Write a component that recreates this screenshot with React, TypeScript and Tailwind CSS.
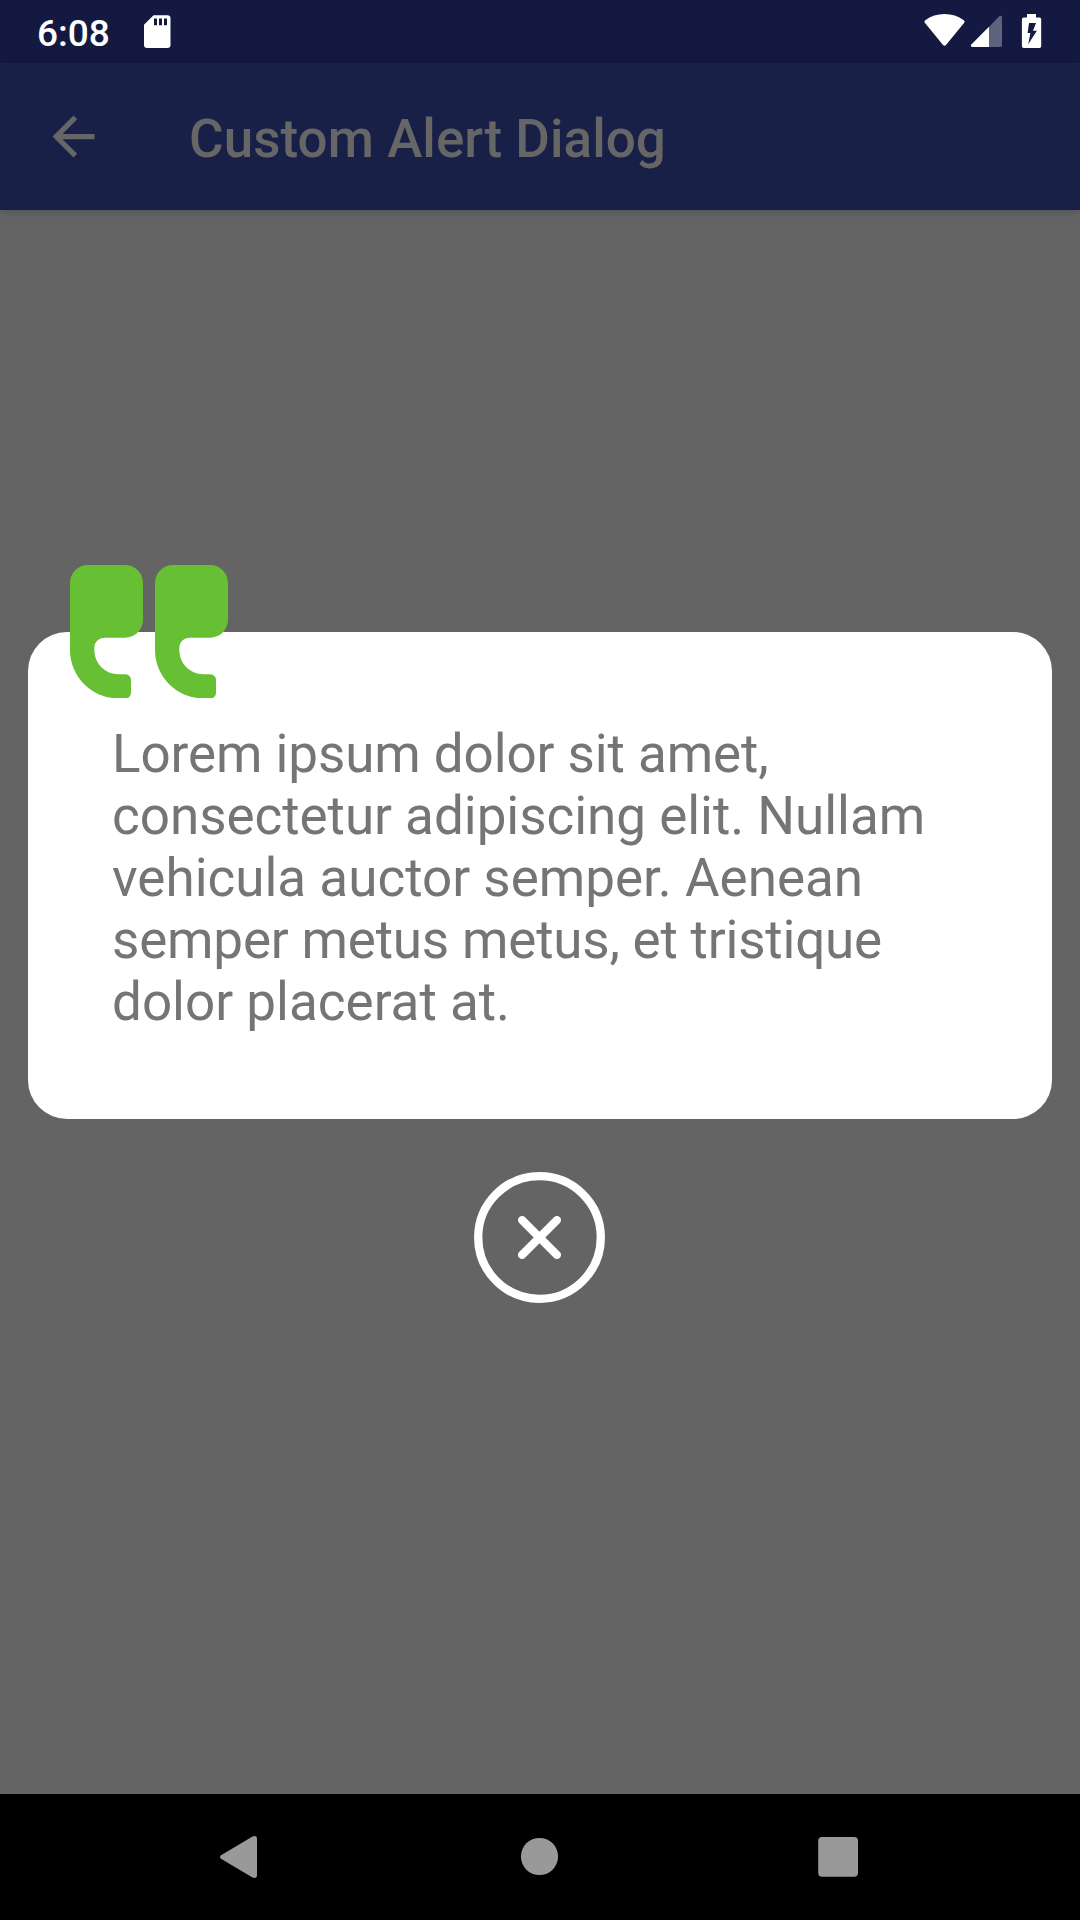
import React from "react";

function StatusBar() {
  return (
    <header className="flex h-[63px] items-center bg-[#131940] pl-[37px] text-white">
      <span className="w-[106px] text-[37px] leading-[43px] font-medium pt-[3px]">6:08</span>
      <svg className="h-[63px] w-[28px]" viewBox="143 0 28 63" fill="currentColor">
        <path
          fillRule="evenodd"
          d="M153.500 15.200H167.500A3 3 0 0 1 170.500 18.200V45A3 3 0 0 1 167.500 48H147A3 3 0 0 1 144 45V24.700ZM154 18.500V25.200H157V18.500ZM159 18.500V25.200H162V18.500ZM164 18.500V25.200H167V18.500Z"
        />
      </svg>
      <div className="ml-auto flex">
        <svg className="h-[63px] w-[44px]" viewBox="922 0 44 63" fill="currentColor">
          <path d="M924.8 22.800Q923.700 21.300 925.200 20.200Q933.500 14.100 944.500 14.100T963.800 20.200Q965.300 21.300 964.200 22.800L946 45Q944.500 46.500 943 45Z" />
        </svg>
        <svg className="h-[63px] w-[44px]" viewBox="966 0 44 63" fill="currentColor">
          <path opacity=".32" d="M988.900 26.900L999 16.600Q1002 14.500 1002 17.500V45Q1002 47 1000 47H988.900Z" />
          <path d="M989 26.800V47H972.500Q970 46.500 971.300 44.500Z" />
        </svg>
        <svg className="h-[63px] w-[70px]" viewBox="1010 0 70 63" fill="currentColor">
          <path
            fillRule="evenodd"
            d="M1027 14H1036V17.600H1039.400Q1041.200 17.600 1041.200 19.400V46.200Q1041.200 48 1039.400 48H1023.700Q1021.900 48 1021.900 46.200V19.400Q1021.900 17.600 1023.700 17.600H1027ZM1029 22.900L1027.600 33.100H1030.400L1028.200 44.200L1036.900 30.700H1033L1036 22.900Z"
          />
        </svg>
      </div>
    </header>
  );
}

function Toolbar() {
  return (
    <div className="relative flex h-[147px] items-center bg-[#192048] pl-[42px] text-[#666666] shadow-[0_2px_7px_rgba(0,0,0,0.16)]">
      <svg className="h-[63px] w-[63px]" viewBox="0 0 24 24" fill="currentColor">
        <path d="M20 11H7.830l5.590-5.590L12 4l-8 8 8 8 1.410-1.410L7.830 13H20v-2z" />
      </svg>
      <h1 className="ml-[84px] pt-[5px] text-[53px] leading-[62px] font-medium tracking-[0.05px] whitespace-nowrap">
        Custom Alert Dialog
      </h1>
    </div>
  );
}

const quoteMark =
  "M54 0H165A54 54 0 0 1 219 54V164A54 54 0 0 1 165 218H103A30 30 0 0 0 73 248V256A72 72 0 0 0 145 328H167A16 16 0 0 1 183 344V384A16 16 0 0 1 167 400H145A145 145 0 0 1 0 255V54A54 54 0 0 1 54 0Z";

function AlertDialog() {
  return (
    <main className="flex flex-1 flex-col items-center pt-[422px]">
      <section className="relative h-[487px] w-[1024px] rounded-[39px] bg-white pt-[91px] pl-[84px]">
        <svg className="absolute -top-[67px] left-[42px] h-[133.333px] w-[158px]" viewBox="0 0 474 400" fill="#67c033">
          <path d={quoteMark} />
          <path d={quoteMark} transform="translate(255 0)" />
        </svg>
        <p className="text-[53px] leading-[62px] whitespace-nowrap text-[#757575]">
          <span className="block tracking-[-0.09px]">Lorem ipsum dolor sit amet,</span>
          <span className="block tracking-[-0.035px]">consectetur adipiscing elit. Nullam</span>
          <span className="block">vehicula auctor semper. Aenean</span>
          <span className="block tracking-[-0.2px]">semper metus metus, et tristique</span>
          <span className="block">dolor placerat at.</span>
        </p>
      </section>
      <button aria-label="Close" className="mt-[53px] mr-px">
        <svg className="block h-[131px] w-[131px]" viewBox="0 0 131 131" fill="none" stroke="white" strokeWidth="8.3">
          <circle cx="65.500" cy="65.500" r="61.300" />
          <path strokeLinecap="round" d="M48.100 48.100L82.900 82.900M82.900 48.100L48.100 82.900" />
        </svg>
      </button>
    </main>
  );
}

function NavigationBar() {
  return (
    <nav className="flex h-[126px] items-center justify-center bg-black">
      <div className="flex w-[300px] justify-center">
        <svg className="h-16 w-16" viewBox="0 0 64 64" fill="#999999">
          <path d="M13 30.300L44.500 11.500Q49 9.800 49 14V50Q49 54.200 44.500 52.500L13 33.700Q11 32 13 30.300Z" />
        </svg>
      </div>
      <div className="flex w-[300px] justify-center">
        <svg className="h-16 w-16" viewBox="0 0 64 64" fill="#999999">
          <circle cx="31.500" cy="31.500" r="18.600" />
        </svg>
      </div>
      <div className="flex w-[300px] justify-center">
        <svg className="h-16 w-16" viewBox="0 0 64 64" fill="#999999">
          <rect x="10.200" y="12" width="39.800" height="39.800" rx="4" />
        </svg>
      </div>
    </nav>
  );
}

export default function App() {
  return (
    <div className="flex h-[1920px] w-[1080px] flex-col overflow-hidden bg-[#646464] font-['Roboto',sans-serif]">
      <StatusBar />
      <Toolbar />
      <AlertDialog />
      <NavigationBar />
    </div>
  );
}
